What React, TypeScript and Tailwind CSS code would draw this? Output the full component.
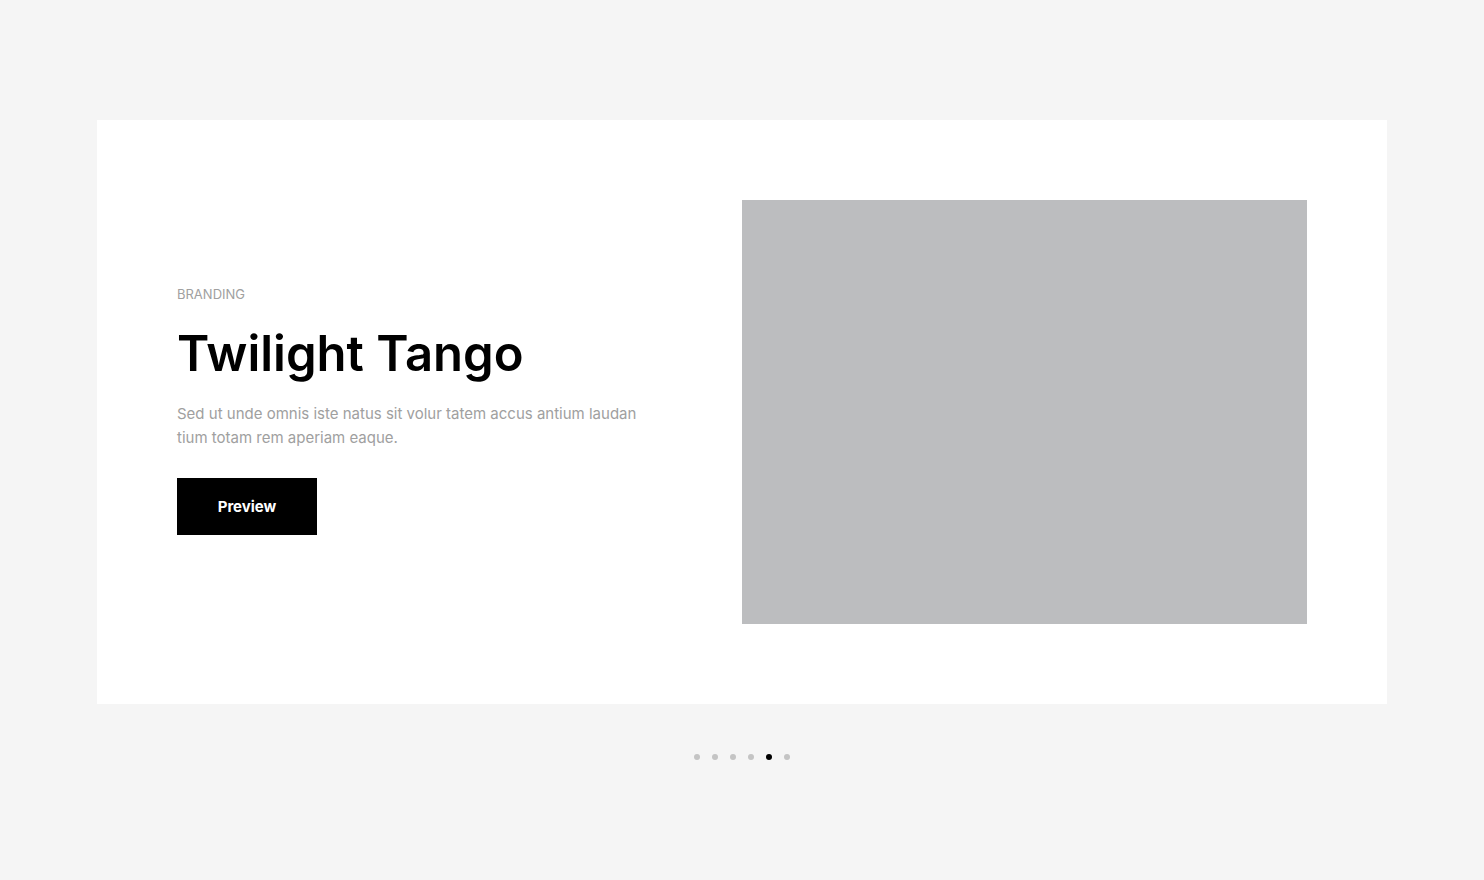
import { useState } from "react";

const slides = ["Slide 1", "Slide 2", "Slide 3", "Slide 4", "Slide 5", "Slide 6"];

export default function App() {
  const [active, setActive] = useState(4);
  return (
    <main className="flex min-h-screen flex-col items-center bg-[#f5f5f5] px-24 py-30 font-['Inter','Liberation_Sans',sans-serif]">
      <section className="grid w-full max-w-[1290px] grid-cols-2 items-center bg-white p-20">
        <div className="flex flex-col items-start pr-20 pb-[6px]">
          <p className="text-[13px] leading-6 text-[#a0a0a0] uppercase">Branding</p>
          <h1 className="mt-4 text-[49px] leading-[64px] font-semibold text-black">Twilight Tango</h1>
          <p className="mt-4 text-[15px] leading-6 text-[#a0a0a0]">
            Sed ut unde omnis iste natus sit volur tatem accus antium laudan tium totam rem aperiam eaque.
          </p>
          <button type="button" className="mt-7 min-w-[140px] bg-black px-10 py-4 text-[15px] leading-[25px] font-bold text-white">
            Preview
          </button>
        </div>
        <div className="aspect-[4/3] w-full bg-[#bcbdbf]" />
      </section>
      <nav aria-label="Slides" className="mt-[50px] flex gap-3">
        {slides.map((label, i) => (
          <button
            key={label}
            type="button"
            aria-label={label}
            onClick={() => setActive(i)}
            className={i === active ? "size-1.5 rounded-full bg-black" : "size-1.5 rounded-full bg-[#c4c4c4]"}
          />
        ))}
      </nav>
    </main>
  );
}
